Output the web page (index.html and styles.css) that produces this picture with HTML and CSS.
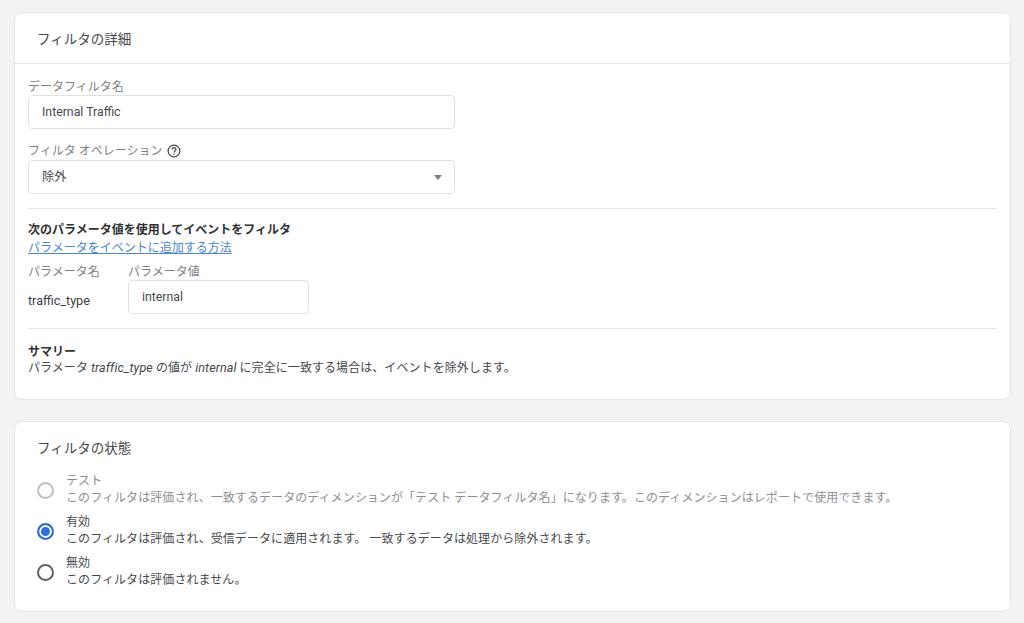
FILE: index.html
```html
<!DOCTYPE html>
<html lang="ja">
<head>
    <meta charset="UTF-8">
    <title>フィルタの詳細</title>
    <link rel="stylesheet" href="styles.css">
</head>
<body>
    <section class="card card_details">
        <h2 class="card_header">フィルタの詳細</h2>
        <div class="card_body">
            <p class="label label_first">データフィルタ名</p>
            <div class="field field_wide">Internal Traffic</div>

            <p class="label label_op">フィルタ オペレーション
                <svg class="help" width="14" height="14" viewBox="0 0 14 14">
                    <circle cx="7" cy="7" r="5.9" fill="none" stroke="#444" stroke-width="1.2"/>
                    <path d="M5.1 5.6a1.9 1.9 0 1 1 3 1.5c-.7.5-1.1.8-1.1 1.5" fill="none" stroke="#444" stroke-width="1.2"/>
                    <circle cx="7" cy="10.2" r=".75" fill="#444"/>
                </svg>
            </p>
            <div class="field field_wide field_select">
                <span>除外</span>
                <span class="caret"></span>
            </div>

            <hr class="divider divider_one">

            <p class="strong">次のパラメータ値を使用してイベントをフィルタ</p>
            <a class="link" href="#">パラメータをイベントに追加する方法</a>

            <div class="params">
                <div class="param_name">
                    <p class="label">パラメータ名</p>
                    <p class="param_text">traffic_type</p>
                </div>
                <div>
                    <p class="label">パラメータ値</p>
                    <div class="field field_small">internal</div>
                </div>
            </div>

            <hr class="divider divider_two">

            <p class="strong">サマリー</p>
            <p class="text text_summary">パラメータ <i>traffic_type</i> の値が <i>internal</i> に完全に一致する場合は、イベントを除外します。</p>
        </div>
    </section>

    <section class="card card_state">
        <h2 class="state_title">フィルタの状態</h2>

        <div class="option option_disabled">
            <span class="radio"></span>
            <div>
                <p class="text">テスト</p>
                <p class="text">このフィルタは評価され、一致するデータのディメンションが「テスト データフィルタ名」になります。このディメンションはレポートで使用できます。</p>
            </div>
        </div>
        <div class="option">
            <span class="radio radio_on"></span>
            <div>
                <p class="text">有効</p>
                <p class="text">このフィルタは評価され、受信データに適用されます。 一致するデータは処理から除外されます。</p>
            </div>
        </div>
        <div class="option">
            <span class="radio"></span>
            <div>
                <p class="text">無効</p>
                <p class="text">このフィルタは評価されません。</p>
            </div>
        </div>
    </section>
</body>
</html>
```

FILE: styles.css
```css
*{
    margin: 0;
    padding: 0;
    box-sizing: border-box;
}
body{
    background-color: #f1f3f5;
    font-family: Roboto, "Noto Sans CJK JP", sans-serif;
    font-size: 12px;
    line-height: 17px;
    color: #3c4043;
    padding: 12px 13px 0 14px;
}
.card{
    background-color: #ffffff;
    border: 1px solid #e3e5e8;
    border-radius: 8px;
}
.card_details{
    height: 388px;
}
.card_state{
    height: 191px;
    margin-top: 21px;
    padding: 17px 22px 0 22px;
}
.card_header{
    height: 51px;
    border-bottom: 1px solid #e3e5e8;
    padding: 17px 22px 0 22px;
    font-size: 13.5px;
    font-weight: 400;
    line-height: 18px;
    color: #45484b;
}
.card_body{
    padding: 13px 13px 0 13px;
}
.label{
    color: #7c7f83;
    height: 18px;
    line-height: 21px;
}
.label_op{
    display: flex;
    align-items: center;
    gap: 4px;
    margin-top: 13px;
}
.field{
    background-color: #ffffff;
    border: 1px solid #dfe1e5;
    border-radius: 4px;
    height: 34px;
    padding: 0 13px;
    display: flex;
    align-items: center;
    color: #45484b;
    font-size: 12.3px;
}
.field_wide{
    width: 427px;
}
.field_select{
    justify-content: space-between;
    padding-right: 12px;
}
.field_small{
    width: 181px;
}
.caret{
    width: 0;
    height: 0;
    border-left: 4.5px solid transparent;
    border-right: 4.5px solid transparent;
    border-top: 5px solid #7a7d81;
}
.divider{
    border: none;
    border-top: 1px solid #e3e5e8;
}
.divider_one{
    margin-top: 14px;
    margin-bottom: 13px;
}
.divider_two{
    margin-top: 14px;
    margin-bottom: 15px;
}
.strong{
    font-weight: 700;
    color: #2f3235;
}
.link{
    display: block;
    margin-top: 1px;
    color: #4a86cf;
    text-decoration: underline;
}
.params{
    display: flex;
    margin-top: 5px;
}
.param_name{
    width: 100px;
}
.param_text{
    margin-top: 12px;
    font-size: 12.6px;
    color: #3c4043;
}
.text{
    color: #45484b;
    letter-spacing: .07px;
}
.text_summary{
    margin-top: -1px;
}
.text_summary i{
    font-size: 12.6px;
    line-height: 1;
}
.state_title{
    font-size: 13.5px;
    font-weight: 400;
    line-height: 18px;
    color: #45484b;
    margin-bottom: 16px;
}
.option{
    display: flex;
    align-items: center;
    gap: 12px;
    margin-bottom: 7px;
}
.option_disabled .text{
    color: #8b8e92;
}
.radio{
    width: 17px;
    height: 17px;
    flex-shrink: 0;
    border: 2px solid #5f6368;
    border-radius: 50%;
}
.option_disabled .radio{
    border-color: #bdc0c3;
}
.radio_on{
    border-color: #2f6fdb;
    background-color: #2f6fdb;
    box-shadow: inset 0 0 0 2px #ffffff;
}
```
